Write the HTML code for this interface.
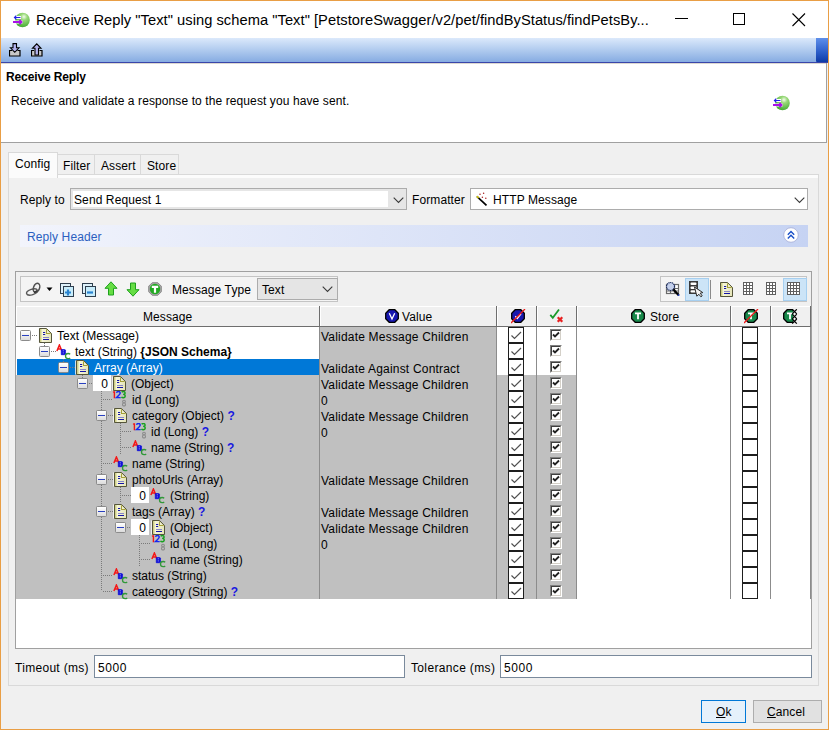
<!DOCTYPE html>
<html><head><meta charset="utf-8">
<style>
*{margin:0;padding:0;box-sizing:border-box}
html,body{width:829px;height:730px;overflow:hidden;background:#f0f0f0;font-family:"Liberation Sans",sans-serif;font-size:12px;color:#000}
.a{position:absolute}
.t{position:absolute;white-space:nowrap;line-height:14px;letter-spacing:0.1px}
#win{left:0;top:0;width:829px;height:730px;border:1px solid #e99e45}
#title{left:1px;top:1px;width:827px;height:37px;background:#fff}
#tbar{left:1px;top:38px;width:827px;height:25px;background:linear-gradient(#dbe9fb,#86ace2);border-bottom:1px solid #3a46aa}
#hdr{left:1px;top:63px;width:826px;height:80px;background:#fff;border-right:1px solid #a0a0a0;border-bottom:1px solid #a0a0a0}
.tab{position:absolute;border:1px solid #d9d9d9;border-bottom:none;background:#f0f0f0}
.panel{position:absolute;border:1px solid #d9d9d9}
.combo{position:absolute;background:#fff;border:1px solid #acacac}
.field{position:absolute;background:#fff;border:1px solid #7a8a9c}
</style></head><body>
<div id="win" class="a"></div>
<div id="title" class="a">
  <svg class="a" style="left:11px;top:10px" width="18" height="18" viewBox="0 0 18 18">
    <defs><radialGradient id="gb" cx="0.6" cy="0.28" r="0.8"><stop offset="0" stop-color="#f4fcee"/><stop offset="0.28" stop-color="#98d878"/><stop offset="1" stop-color="#38a428"/></radialGradient></defs>
    <circle cx="10.5" cy="9" r="7.3" fill="url(#gb)"/>
    <path d="M2.5 6.5h6.5M2.5 11h8" stroke="#fff" stroke-width="3.2"/>
    <path d="M2.5 6.5h6M4.3 4.7L2.5 6.5L4.3 8.3" stroke="#2020e8" stroke-width="1.2" fill="none"/>
    <path d="M1 11h8.5M7.5 9L9.5 11L7.5 13" stroke="#a812e8" stroke-width="1.8" fill="none"/>
  </svg>
  <div class="t" style="left:35px;top:10px;font-size:14.7px;line-height:18px;color:#000;letter-spacing:0.04px">Receive Reply "Text" using schema "Text" [PetstoreSwagger/v2/pet/findByStatus/findPetsBy...</div>
  <div class="a" style="left:674px;top:17px;width:13px;height:1px;background:#000"></div>
  <div class="a" style="left:732px;top:12px;width:12px;height:12px;border:1px solid #000"></div>
  <svg class="a" style="left:790px;top:11px" width="16" height="16" viewBox="0 0 16 16"><path d="M1.5 1.5L14 14M14 1.5L1.5 14" stroke="#000" stroke-width="1.1"/></svg>
</div>
<div id="tbar" class="a">
  <div class="a" style="right:0;top:0;width:12px;height:24px;border-radius:0 0 0 1px;background:linear-gradient(#5f8fea,#2a5cc8 60%,#0d3aa6)"></div>
  <svg class="a" style="left:8px;top:5px" width="12" height="14" viewBox="0 0 12 14"><path d="M3 7.5H0.5V13H11V7.5H8.5" stroke="#000" stroke-width="1.2" fill="#c8c8c8"/><path d="M4 0.6H7.5V4.8H10L5.75 9.3L1.5 4.8H4Z" fill="#b4b4f0" stroke="#000" stroke-width="1.1"/></svg>
  <svg class="a" style="left:30px;top:5px" width="12" height="14" viewBox="0 0 12 14"><path d="M3 7.5H0.5V13H11V7.5H8.5" stroke="#000" stroke-width="1.2" fill="#c8c8c8"/><path d="M4 12V5.3H1.5L5.75 0.8L10 5.3H7.5V12Z" fill="#b4b4f0" stroke="#000" stroke-width="1.1"/></svg>
</div>
<div id="hdr" class="a">
  <div class="a" style="left:0;top:0;width:825px;height:1px;background:#dcd8d0"></div>
  <div class="t" style="left:5px;top:7px;font-weight:bold;letter-spacing:-0.12px">Receive Reply</div>
  <div class="t" style="left:10px;top:31px">Receive and validate a response to the request you have sent.</div>
  <svg class="a" style="left:771px;top:31px" width="18" height="18" viewBox="0 0 18 18">
    <defs><radialGradient id="gb2" cx="0.6" cy="0.28" r="0.8"><stop offset="0" stop-color="#f4fcee"/><stop offset="0.28" stop-color="#98d878"/><stop offset="1" stop-color="#38a428"/></radialGradient></defs>
    <circle cx="10.5" cy="9" r="7.3" fill="url(#gb2)"/>
    <path d="M2.5 6.5h6.5M2.5 11h8" stroke="#fff" stroke-width="3.2"/>
    <path d="M2.5 6.5h6M4.3 4.7L2.5 6.5L4.3 8.3" stroke="#2020e8" stroke-width="1.2" fill="none"/>
    <path d="M1 11h8.5M7.5 9L9.5 11L7.5 13" stroke="#a812e8" stroke-width="1.8" fill="none"/>
  </svg>
</div>

<!-- tabs -->
<div class="tab" style="left:8px;top:152px;width:50px;height:26px;background:#fbfbfb;z-index:2"><div class="t" style="left:6px;top:4px">Config</div></div>
<div class="tab" style="left:57px;top:154px;width:38px;height:20px"><div class="t" style="left:5px;top:4px">Filter</div></div>
<div class="tab" style="left:94px;top:154px;width:47px;height:20px"><div class="t" style="left:6px;top:4px">Assert</div></div>
<div class="tab" style="left:140px;top:154px;width:39px;height:20px"><div class="t" style="left:6px;top:4px">Store</div></div>
<div class="panel" style="left:8px;top:174px;width:811px;height:512px;background:#f0f0f0"></div><div class="a" style="left:9px;top:175px;width:809px;height:3px;background:#fcfcfc"></div>
<!-- reply to row -->
<div class="t" style="left:20px;top:193px">Reply to</div>
<div class="combo" style="left:70px;top:188px;width:337px;height:22px;background:#e6e6e6">
  <div class="a" style="left:2px;top:2px;width:315px;height:16px;background:#fff"></div>
  <div class="t" style="left:3px;top:4px">Send Request 1</div>
  <svg class="a" style="left:322px;top:8px" width="11" height="7" viewBox="0 0 11 7"><path d="M0.7 0.7L5.5 5.5L10.3 0.7" stroke="#3a3a3a" stroke-width="1.1" fill="none"/></svg>
</div>
<div class="t" style="left:412px;top:193px">Formatter</div>
<div class="combo" style="left:470px;top:188px;width:338px;height:22px">
  <svg class="a" style="left:4px;top:3px" width="14" height="14" viewBox="0 0 14 14"><path d="M1.8 4.3L11.5 13.3" stroke="#000" stroke-width="1.7"/><path d="M1.8 4.3L3.6 6" stroke="#f4e400" stroke-width="1.2"/><circle cx="5" cy="2.2" r="0.75" fill="#a82020"/><circle cx="8.6" cy="1.2" r="0.75" fill="#a82020"/><circle cx="7.4" cy="5.3" r="0.75" fill="#a82020"/><circle cx="10.8" cy="6.3" r="0.75" fill="#a82020"/></svg>
  <div class="t" style="left:22px;top:4px">HTTP Message</div>
  <svg class="a" style="left:323px;top:8px" width="11" height="7" viewBox="0 0 11 7"><path d="M0.7 0.7L5.5 5.5L10.3 0.7" stroke="#3a3a3a" stroke-width="1.1" fill="none"/></svg>
</div>
<!-- reply header -->
<div class="a" style="left:20px;top:225px;width:788px;height:22px;background:linear-gradient(90deg,#f2f4fc,#c6d3f3)">
  <div class="t" style="left:7px;top:5px;color:#2b5fc0">Reply Header</div>
  <svg class="a" style="left:762px;top:1px" width="18" height="18" viewBox="0 0 18 18"><circle cx="9" cy="9" r="7.3" fill="#fff" stroke="#aab2da" stroke-width="0.9"/><path d="M5.8 8.7L9 5.5L12.2 8.7M5.8 12.5L9 9.3L12.2 12.5" stroke="#1a50c8" stroke-width="1.4" fill="none"/></svg>
</div>
<!-- table panel -->
<div class="a" style="left:15px;top:271px;width:797px;height:378px;border:1px solid #a0a0a0;background:#fff"></div>
<div class="a" style="left:16px;top:272px;width:795px;height:35px;background:#f0f0f0"></div>
<div class="a" style="left:20px;top:276px;width:318px;height:26px;border:1px solid #c4c4c4;background:#f4f4f4"></div>
<div class="a" style="left:660px;top:276px;width:147px;height:26px;border:1px solid #c4c4c4;background:#f4f4f4"></div>
<div class="t" style="left:172px;top:283px">Message Type</div>
<div class="a" style="left:257px;top:278px;width:81px;height:22px;border:1px solid #acacac;background:#e5e5e5">
  <div class="t" style="left:4px;top:4px">Text</div>
  <svg class="a" style="left:64px;top:7px" width="11" height="7" viewBox="0 0 11 7"><path d="M0.7 0.7L5.5 5.5L10.3 0.7" stroke="#3a3a3a" stroke-width="1.1" fill="none"/></svg>
</div>
<!-- timeout row -->
<div class="t" style="left:15px;top:661px;letter-spacing:0.3px">Timeout (ms)</div>
<div class="field" style="left:94px;top:655px;width:311px;height:23px"><div class="t" style="left:3px;top:5px;letter-spacing:0.6px">5000</div></div>
<div class="t" style="left:411px;top:661px;letter-spacing:0.35px">Tolerance (ms)</div>
<div class="field" style="left:500px;top:655px;width:312px;height:23px"><div class="t" style="left:3px;top:5px;letter-spacing:0.6px">5000</div></div>
<!-- buttons -->
<div class="a" style="left:701px;top:700px;width:45px;height:23px;border:1px solid #0078d7;background:#e5f1fb"><div class="t" style="left:14px;top:4px"><u>O</u>k</div></div>
<div class="a" style="left:753px;top:700px;width:69px;height:23px;border:1px solid #adadad;background:#e1e1e1"><div class="t" style="left:13px;top:4px"><u>C</u>ancel</div></div>

<svg width="0" height="0" style="position:absolute"><defs><linearGradient id="docg" x1="0" y1="0" x2="1" y2="0"><stop offset="0" stop-color="#bcbc60"/><stop offset="0.25" stop-color="#f6f6d8"/><stop offset="1" stop-color="#e4e4b8"/></linearGradient></defs></svg><div class="a" style="left:16px;top:327px;width:303px;height:32px;background:#fff"></div><div class="a" style="left:17px;top:359px;width:302px;height:16px;background:#0078d7"></div><div class="a" style="left:16px;top:375px;width:303px;height:224px;background:#c0c0c0"></div><div class="a" style="left:320px;top:327px;width:176px;height:272px;background:#c0c0c0"></div><div class="a" style="left:497px;top:375px;width:79px;height:224px;background:#c0c0c0"></div><div class="a" style="left:319px;top:327px;width:1px;height:272px;background:#8c8c8c"></div><div class="a" style="left:496px;top:327px;width:1px;height:272px;background:#8c8c8c"></div><div class="a" style="left:536px;top:327px;width:1px;height:272px;background:#8c8c8c"></div><div class="a" style="left:576px;top:327px;width:1px;height:272px;background:#8c8c8c"></div><div class="a" style="left:730px;top:327px;width:1px;height:272px;background:#8c8c8c"></div><div class="a" style="left:770px;top:327px;width:1px;height:272px;background:#8c8c8c"></div><div class="a" style="left:810px;top:327px;width:1px;height:272px;background:#8c8c8c"></div><div class="a" style="left:44px;top:343px;width:1px;height:3px;background:repeating-linear-gradient(#7a7a7a 0 1px,transparent 1px 2px)"></div><div class="a" style="left:32px;top:335px;width:5px;height:1px;background:repeating-linear-gradient(90deg,#7a7a7a 0 1px,transparent 1px 2px)"></div><div class="a" style="left:51px;top:351px;width:5px;height:1px;background:repeating-linear-gradient(90deg,#7a7a7a 0 1px,transparent 1px 2px)"></div><div class="a" style="left:70px;top:367px;width:5px;height:1px;background:repeating-linear-gradient(90deg,#7a7a7a 0 1px,transparent 1px 2px)"></div><div class="a" style="left:89px;top:383px;width:3px;height:1px;background:repeating-linear-gradient(90deg,#7a7a7a 0 1px,transparent 1px 2px)"></div><div class="a" style="left:103px;top:399px;width:9px;height:1px;background:repeating-linear-gradient(90deg,#7a7a7a 0 1px,transparent 1px 2px)"></div><div class="a" style="left:108px;top:415px;width:5px;height:1px;background:repeating-linear-gradient(90deg,#7a7a7a 0 1px,transparent 1px 2px)"></div><div class="a" style="left:122px;top:431px;width:10px;height:1px;background:repeating-linear-gradient(90deg,#7a7a7a 0 1px,transparent 1px 2px)"></div><div class="a" style="left:122px;top:447px;width:10px;height:1px;background:repeating-linear-gradient(90deg,#7a7a7a 0 1px,transparent 1px 2px)"></div><div class="a" style="left:103px;top:463px;width:9px;height:1px;background:repeating-linear-gradient(90deg,#7a7a7a 0 1px,transparent 1px 2px)"></div><div class="a" style="left:108px;top:479px;width:5px;height:1px;background:repeating-linear-gradient(90deg,#7a7a7a 0 1px,transparent 1px 2px)"></div><div class="a" style="left:122px;top:495px;width:9px;height:1px;background:repeating-linear-gradient(90deg,#7a7a7a 0 1px,transparent 1px 2px)"></div><div class="a" style="left:108px;top:511px;width:5px;height:1px;background:repeating-linear-gradient(90deg,#7a7a7a 0 1px,transparent 1px 2px)"></div><div class="a" style="left:127px;top:527px;width:4px;height:1px;background:repeating-linear-gradient(90deg,#7a7a7a 0 1px,transparent 1px 2px)"></div><div class="a" style="left:141px;top:543px;width:10px;height:1px;background:repeating-linear-gradient(90deg,#7a7a7a 0 1px,transparent 1px 2px)"></div><div class="a" style="left:141px;top:559px;width:10px;height:1px;background:repeating-linear-gradient(90deg,#7a7a7a 0 1px,transparent 1px 2px)"></div><div class="a" style="left:103px;top:575px;width:9px;height:1px;background:repeating-linear-gradient(90deg,#7a7a7a 0 1px,transparent 1px 2px)"></div><div class="a" style="left:103px;top:591px;width:9px;height:1px;background:repeating-linear-gradient(90deg,#7a7a7a 0 1px,transparent 1px 2px)"></div><div class="a" style="left:63px;top:359px;width:1px;height:3px;background:repeating-linear-gradient(#7a7a7a 0 1px,transparent 1px 2px)"></div><div class="a" style="left:82px;top:375px;width:1px;height:3px;background:repeating-linear-gradient(#7a7a7a 0 1px,transparent 1px 2px)"></div><div class="a" style="left:101px;top:391px;width:1px;height:200px;background:repeating-linear-gradient(#7a7a7a 0 1px,transparent 1px 2px)"></div><div class="a" style="left:120px;top:423px;width:1px;height:32px;background:repeating-linear-gradient(#7a7a7a 0 1px,transparent 1px 2px)"></div><div class="a" style="left:120px;top:487px;width:1px;height:16px;background:repeating-linear-gradient(#7a7a7a 0 1px,transparent 1px 2px)"></div><div class="a" style="left:139px;top:535px;width:1px;height:32px;background:repeating-linear-gradient(#7a7a7a 0 1px,transparent 1px 2px)"></div><div class="a" style="left:20px;top:330px;width:11px;height:11px;border:1px solid #8b8b8b;border-radius:1.5px;background:linear-gradient(#ffffff,#dcdcdc)"><div class="a" style="left:1px;top:4px;width:7px;height:1px;background:#2940c0"></div></div><svg class="a" style="left:38px;top:328px" width="15" height="15" viewBox="0 0 15 15"><rect x="0" y="0.5" width="2" height="14" fill="#fafafa" opacity="0.8"/><path d="M1.5 0.5H8.5L13.5 5.5V14.5H1.5Z" fill="url(#docg)" stroke="#55553a" stroke-width="1"/><path d="M8 0.8V6H13.2Z" fill="#a4a038"/><path d="M9 1.8V5H12.2Z" fill="#eeeed0"/><path d="M5 4.5h2.2M5 6.5h2.2M5 11.5h6" stroke="#1414a8" stroke-width="1"/><path d="M5 9.5h6" stroke="#8888c8" stroke-width="1"/></svg><div class="t" style="left:57px;top:329px;color:#000;z-index:1;letter-spacing:0">Text (Message)</div><div class="t" style="left:321px;top:330px;letter-spacing:0.2px">Validate Message Children</div><div class="a" style="left:508px;top:327px;width:16px;height:16px;border:1px solid #1e1e1e;background:#fff"></div><svg class="a" style="left:508px;top:327px" width="16" height="16" viewBox="0 0 16 16"><path d="M3.5 8.5L6.5 11.5L13 5" stroke="#505050" stroke-width="1.2" fill="none"/></svg><div class="a" style="left:550px;top:329px;width:12px;height:12px;border:1px solid;border-color:#808080 #fff #fff #808080;background:#fff"><div class="a" style="left:0;top:0;width:10px;height:10px;border:1px solid;border-color:#404040 #d4d0c8 #d4d0c8 #404040"></div></div><svg class="a" style="left:550px;top:329px" width="12" height="12" viewBox="0 0 12 12"><path d="M3 5.5L5 7.5L9 3.5" stroke="#222" stroke-width="1.8" fill="none"/></svg><div class="a" style="left:742px;top:327px;width:16px;height:16px;border:1px solid #1e1e1e;background:#fff"></div><div class="a" style="left:39px;top:346px;width:11px;height:11px;border:1px solid #8b8b8b;border-radius:1.5px;background:linear-gradient(#ffffff,#dcdcdc)"><div class="a" style="left:1px;top:4px;width:7px;height:1px;background:#2940c0"></div></div><svg class="a" style="left:56px;top:344px" width="15" height="16" viewBox="0 0 15 16"><path d="M0.9 7L3.4 1L5.9 7M1.9 5h3" stroke="#f41818" stroke-width="1.5" fill="none"/><path d="M5.3 5.6h2.9q1.5 0 1.5 1.3q0 0.9-0.8 1.1q1 0.3 1 1.3q0 1.4-1.6 1.4h-3z" fill="#1010d8" stroke="#1010d8" stroke-width="0.8"/><path d="M6.8 6.8h0.9M6.8 8.9h0.9" stroke="#c8c8f0" stroke-width="0.9"/><path d="M14.2 10.2q-0.8-0.7-2.1-0.7q-2.6 0-2.6 2.6q0 2.6 2.6 2.6q1.3 0 2.1-0.7" stroke="#309838" stroke-width="1.3" fill="none"/></svg><div class="t" style="left:75px;top:345px;color:#000;z-index:1;letter-spacing:0">text (String) <b>{JSON Schema}</b></div><div class="a" style="left:508px;top:343px;width:16px;height:16px;border:1px solid #1e1e1e;background:#fff"></div><svg class="a" style="left:508px;top:343px" width="16" height="16" viewBox="0 0 16 16"><path d="M3.5 8.5L6.5 11.5L13 5" stroke="#505050" stroke-width="1.2" fill="none"/></svg><div class="a" style="left:550px;top:345px;width:12px;height:12px;border:1px solid;border-color:#808080 #fff #fff #808080;background:#fff"><div class="a" style="left:0;top:0;width:10px;height:10px;border:1px solid;border-color:#404040 #d4d0c8 #d4d0c8 #404040"></div></div><svg class="a" style="left:550px;top:345px" width="12" height="12" viewBox="0 0 12 12"><path d="M3 5.5L5 7.5L9 3.5" stroke="#222" stroke-width="1.8" fill="none"/></svg><div class="a" style="left:742px;top:343px;width:16px;height:16px;border:1px solid #1e1e1e;background:#fff"></div><div class="a" style="left:58px;top:362px;width:11px;height:11px;border:1px solid #8b8b8b;border-radius:1.5px;background:linear-gradient(#ffffff,#dcdcdc)"><div class="a" style="left:1px;top:4px;width:7px;height:1px;background:#2940c0"></div></div><svg class="a" style="left:75px;top:360px" width="15" height="15" viewBox="0 0 15 15"><rect x="0" y="0.5" width="2" height="14" fill="#fafafa" opacity="0.8"/><path d="M1.5 0.5H8.5L13.5 5.5V14.5H1.5Z" fill="url(#docg)" stroke="#55553a" stroke-width="1"/><path d="M8 0.8V6H13.2Z" fill="#a4a038"/><path d="M9 1.8V5H12.2Z" fill="#eeeed0"/><path d="M5 4.5h2.2M5 6.5h2.2M5 11.5h6" stroke="#1414a8" stroke-width="1"/><path d="M5 9.5h6" stroke="#8888c8" stroke-width="1"/></svg><div class="t" style="left:94px;top:361px;color:#fff;z-index:1;letter-spacing:0">Array (Array)</div><div class="t" style="left:321px;top:362px;letter-spacing:0.2px">Validate Against Contract</div><div class="a" style="left:508px;top:359px;width:16px;height:16px;border:1px solid #1e1e1e;background:#fff"></div><svg class="a" style="left:508px;top:359px" width="16" height="16" viewBox="0 0 16 16"><path d="M3.5 8.5L6.5 11.5L13 5" stroke="#505050" stroke-width="1.2" fill="none"/></svg><div class="a" style="left:550px;top:361px;width:12px;height:12px;border:1px solid;border-color:#808080 #fff #fff #808080;background:#fff"><div class="a" style="left:0;top:0;width:10px;height:10px;border:1px solid;border-color:#404040 #d4d0c8 #d4d0c8 #404040"></div></div><svg class="a" style="left:550px;top:361px" width="12" height="12" viewBox="0 0 12 12"><path d="M3 5.5L5 7.5L9 3.5" stroke="#222" stroke-width="1.8" fill="none"/></svg><div class="a" style="left:742px;top:359px;width:16px;height:16px;border:1px solid #1e1e1e;background:#fff"></div><div class="a" style="left:77px;top:378px;width:11px;height:11px;border:1px solid #8b8b8b;border-radius:1.5px;background:linear-gradient(#ffffff,#dcdcdc)"><div class="a" style="left:1px;top:4px;width:7px;height:1px;background:#2940c0"></div></div><div class="a" style="left:93px;top:375px;width:18px;height:16px;background:#fff"><div class="t" style="right:3px;top:2px">0</div></div><svg class="a" style="left:112px;top:376px" width="15" height="15" viewBox="0 0 15 15"><rect x="0" y="0.5" width="2" height="14" fill="#fafafa" opacity="0.8"/><path d="M1.5 0.5H8.5L13.5 5.5V14.5H1.5Z" fill="url(#docg)" stroke="#55553a" stroke-width="1"/><path d="M8 0.8V6H13.2Z" fill="#a4a038"/><path d="M9 1.8V5H12.2Z" fill="#eeeed0"/><path d="M5 4.5h2.2M5 6.5h2.2M5 11.5h6" stroke="#1414a8" stroke-width="1"/><path d="M5 9.5h6" stroke="#8888c8" stroke-width="1"/></svg><div class="t" style="left:131px;top:377px;color:#000;z-index:1;letter-spacing:0">(Object)</div><div class="t" style="left:321px;top:378px;letter-spacing:0.2px">Validate Message Children</div><div class="a" style="left:508px;top:375px;width:16px;height:16px;border:1px solid #1e1e1e;background:#fff"></div><svg class="a" style="left:508px;top:375px" width="16" height="16" viewBox="0 0 16 16"><path d="M3.5 8.5L6.5 11.5L13 5" stroke="#505050" stroke-width="1.2" fill="none"/></svg><div class="a" style="left:550px;top:377px;width:12px;height:12px;border:1px solid;border-color:#808080 #fff #fff #808080;background:#fff"><div class="a" style="left:0;top:0;width:10px;height:10px;border:1px solid;border-color:#404040 #d4d0c8 #d4d0c8 #404040"></div></div><svg class="a" style="left:550px;top:377px" width="12" height="12" viewBox="0 0 12 12"><path d="M3 5.5L5 7.5L9 3.5" stroke="#222" stroke-width="1.8" fill="none"/></svg><div class="a" style="left:742px;top:375px;width:16px;height:16px;border:1px solid #1e1e1e;background:#fff"></div><svg class="a" style="left:112px;top:391px" width="15" height="16" viewBox="0 0 15 16"><path d="M2.4 0.3V7.2M1.2 1.6L2.4 0.5" stroke="#f01818" stroke-width="1.4" fill="none"/><path d="M4.4 1.8Q5 0.5 6.5 0.5Q8.2 0.5 8.2 2.1Q8.2 3.3 4.5 6.6H8.7" stroke="#1428f0" stroke-width="1.4" fill="none"/><path d="M9.6 1.1Q10.3 0.5 11.3 0.5Q13.1 0.5 13.1 1.9Q13.1 3.4 11.1 3.4Q13.2 3.4 13.2 5.1Q13.2 6.8 11.2 6.8Q10.1 6.8 9.4 6.1" stroke="#18a020" stroke-width="1.4" fill="none"/><path d="M12 9.3q-1.4 0-1.4 1.3t1.4 1.3t1.5 1.5t-1.5 1.5t-1.5-1.5t1.5-1.5t1.4-1.3t-1.4-1.3z" stroke="#8c8c8c" stroke-width="1.1" fill="none"/></svg><div class="t" style="left:132px;top:393px;color:#000;z-index:1;letter-spacing:0">id (Long)</div><div class="t" style="left:321px;top:394px;letter-spacing:0.2px">0</div><div class="a" style="left:508px;top:391px;width:16px;height:16px;border:1px solid #1e1e1e;background:#fff"></div><svg class="a" style="left:508px;top:391px" width="16" height="16" viewBox="0 0 16 16"><path d="M3.5 8.5L6.5 11.5L13 5" stroke="#505050" stroke-width="1.2" fill="none"/></svg><div class="a" style="left:550px;top:393px;width:12px;height:12px;border:1px solid;border-color:#808080 #fff #fff #808080;background:#fff"><div class="a" style="left:0;top:0;width:10px;height:10px;border:1px solid;border-color:#404040 #d4d0c8 #d4d0c8 #404040"></div></div><svg class="a" style="left:550px;top:393px" width="12" height="12" viewBox="0 0 12 12"><path d="M3 5.5L5 7.5L9 3.5" stroke="#222" stroke-width="1.8" fill="none"/></svg><div class="a" style="left:742px;top:391px;width:16px;height:16px;border:1px solid #1e1e1e;background:#fff"></div><div class="a" style="left:96px;top:410px;width:11px;height:11px;border:1px solid #8b8b8b;border-radius:1.5px;background:linear-gradient(#ffffff,#dcdcdc)"><div class="a" style="left:1px;top:4px;width:7px;height:1px;background:#2940c0"></div></div><svg class="a" style="left:113px;top:408px" width="15" height="15" viewBox="0 0 15 15"><rect x="0" y="0.5" width="2" height="14" fill="#fafafa" opacity="0.8"/><path d="M1.5 0.5H8.5L13.5 5.5V14.5H1.5Z" fill="url(#docg)" stroke="#55553a" stroke-width="1"/><path d="M8 0.8V6H13.2Z" fill="#a4a038"/><path d="M9 1.8V5H12.2Z" fill="#eeeed0"/><path d="M5 4.5h2.2M5 6.5h2.2M5 11.5h6" stroke="#1414a8" stroke-width="1"/><path d="M5 9.5h6" stroke="#8888c8" stroke-width="1"/></svg><div class="t" style="left:132px;top:409px;color:#000;z-index:1;letter-spacing:0">category (Object) <b style="color:#1818e0">?</b></div><div class="t" style="left:321px;top:410px;letter-spacing:0.2px">Validate Message Children</div><div class="a" style="left:508px;top:407px;width:16px;height:16px;border:1px solid #1e1e1e;background:#fff"></div><svg class="a" style="left:508px;top:407px" width="16" height="16" viewBox="0 0 16 16"><path d="M3.5 8.5L6.5 11.5L13 5" stroke="#505050" stroke-width="1.2" fill="none"/></svg><div class="a" style="left:550px;top:409px;width:12px;height:12px;border:1px solid;border-color:#808080 #fff #fff #808080;background:#fff"><div class="a" style="left:0;top:0;width:10px;height:10px;border:1px solid;border-color:#404040 #d4d0c8 #d4d0c8 #404040"></div></div><svg class="a" style="left:550px;top:409px" width="12" height="12" viewBox="0 0 12 12"><path d="M3 5.5L5 7.5L9 3.5" stroke="#222" stroke-width="1.8" fill="none"/></svg><div class="a" style="left:742px;top:407px;width:16px;height:16px;border:1px solid #1e1e1e;background:#fff"></div><svg class="a" style="left:132px;top:423px" width="15" height="16" viewBox="0 0 15 16"><path d="M2.4 0.3V7.2M1.2 1.6L2.4 0.5" stroke="#f01818" stroke-width="1.4" fill="none"/><path d="M4.4 1.8Q5 0.5 6.5 0.5Q8.2 0.5 8.2 2.1Q8.2 3.3 4.5 6.6H8.7" stroke="#1428f0" stroke-width="1.4" fill="none"/><path d="M9.6 1.1Q10.3 0.5 11.3 0.5Q13.1 0.5 13.1 1.9Q13.1 3.4 11.1 3.4Q13.2 3.4 13.2 5.1Q13.2 6.8 11.2 6.8Q10.1 6.8 9.4 6.1" stroke="#18a020" stroke-width="1.4" fill="none"/><path d="M12 9.3q-1.4 0-1.4 1.3t1.4 1.3t1.5 1.5t-1.5 1.5t-1.5-1.5t1.5-1.5t1.4-1.3t-1.4-1.3z" stroke="#8c8c8c" stroke-width="1.1" fill="none"/></svg><div class="t" style="left:151px;top:425px;color:#000;z-index:1;letter-spacing:0">id (Long) <b style="color:#1818e0">?</b></div><div class="t" style="left:321px;top:426px;letter-spacing:0.2px">0</div><div class="a" style="left:508px;top:423px;width:16px;height:16px;border:1px solid #1e1e1e;background:#fff"></div><svg class="a" style="left:508px;top:423px" width="16" height="16" viewBox="0 0 16 16"><path d="M3.5 8.5L6.5 11.5L13 5" stroke="#505050" stroke-width="1.2" fill="none"/></svg><div class="a" style="left:550px;top:425px;width:12px;height:12px;border:1px solid;border-color:#808080 #fff #fff #808080;background:#fff"><div class="a" style="left:0;top:0;width:10px;height:10px;border:1px solid;border-color:#404040 #d4d0c8 #d4d0c8 #404040"></div></div><svg class="a" style="left:550px;top:425px" width="12" height="12" viewBox="0 0 12 12"><path d="M3 5.5L5 7.5L9 3.5" stroke="#222" stroke-width="1.8" fill="none"/></svg><div class="a" style="left:742px;top:423px;width:16px;height:16px;border:1px solid #1e1e1e;background:#fff"></div><svg class="a" style="left:132px;top:440px" width="15" height="16" viewBox="0 0 15 16"><path d="M0.9 7L3.4 1L5.9 7M1.9 5h3" stroke="#f41818" stroke-width="1.5" fill="none"/><path d="M5.3 5.6h2.9q1.5 0 1.5 1.3q0 0.9-0.8 1.1q1 0.3 1 1.3q0 1.4-1.6 1.4h-3z" fill="#1010d8" stroke="#1010d8" stroke-width="0.8"/><path d="M6.8 6.8h0.9M6.8 8.9h0.9" stroke="#c8c8f0" stroke-width="0.9"/><path d="M14.2 10.2q-0.8-0.7-2.1-0.7q-2.6 0-2.6 2.6q0 2.6 2.6 2.6q1.3 0 2.1-0.7" stroke="#309838" stroke-width="1.3" fill="none"/></svg><div class="t" style="left:151px;top:441px;color:#000;z-index:1;letter-spacing:0">name (String) <b style="color:#1818e0">?</b></div><div class="a" style="left:508px;top:439px;width:16px;height:16px;border:1px solid #1e1e1e;background:#fff"></div><svg class="a" style="left:508px;top:439px" width="16" height="16" viewBox="0 0 16 16"><path d="M3.5 8.5L6.5 11.5L13 5" stroke="#505050" stroke-width="1.2" fill="none"/></svg><div class="a" style="left:550px;top:441px;width:12px;height:12px;border:1px solid;border-color:#808080 #fff #fff #808080;background:#fff"><div class="a" style="left:0;top:0;width:10px;height:10px;border:1px solid;border-color:#404040 #d4d0c8 #d4d0c8 #404040"></div></div><svg class="a" style="left:550px;top:441px" width="12" height="12" viewBox="0 0 12 12"><path d="M3 5.5L5 7.5L9 3.5" stroke="#222" stroke-width="1.8" fill="none"/></svg><div class="a" style="left:742px;top:439px;width:16px;height:16px;border:1px solid #1e1e1e;background:#fff"></div><svg class="a" style="left:113px;top:456px" width="15" height="16" viewBox="0 0 15 16"><path d="M0.9 7L3.4 1L5.9 7M1.9 5h3" stroke="#f41818" stroke-width="1.5" fill="none"/><path d="M5.3 5.6h2.9q1.5 0 1.5 1.3q0 0.9-0.8 1.1q1 0.3 1 1.3q0 1.4-1.6 1.4h-3z" fill="#1010d8" stroke="#1010d8" stroke-width="0.8"/><path d="M6.8 6.8h0.9M6.8 8.9h0.9" stroke="#c8c8f0" stroke-width="0.9"/><path d="M14.2 10.2q-0.8-0.7-2.1-0.7q-2.6 0-2.6 2.6q0 2.6 2.6 2.6q1.3 0 2.1-0.7" stroke="#309838" stroke-width="1.3" fill="none"/></svg><div class="t" style="left:132px;top:457px;color:#000;z-index:1;letter-spacing:0">name (String)</div><div class="a" style="left:508px;top:455px;width:16px;height:16px;border:1px solid #1e1e1e;background:#fff"></div><svg class="a" style="left:508px;top:455px" width="16" height="16" viewBox="0 0 16 16"><path d="M3.5 8.5L6.5 11.5L13 5" stroke="#505050" stroke-width="1.2" fill="none"/></svg><div class="a" style="left:550px;top:457px;width:12px;height:12px;border:1px solid;border-color:#808080 #fff #fff #808080;background:#fff"><div class="a" style="left:0;top:0;width:10px;height:10px;border:1px solid;border-color:#404040 #d4d0c8 #d4d0c8 #404040"></div></div><svg class="a" style="left:550px;top:457px" width="12" height="12" viewBox="0 0 12 12"><path d="M3 5.5L5 7.5L9 3.5" stroke="#222" stroke-width="1.8" fill="none"/></svg><div class="a" style="left:742px;top:455px;width:16px;height:16px;border:1px solid #1e1e1e;background:#fff"></div><div class="a" style="left:96px;top:474px;width:11px;height:11px;border:1px solid #8b8b8b;border-radius:1.5px;background:linear-gradient(#ffffff,#dcdcdc)"><div class="a" style="left:1px;top:4px;width:7px;height:1px;background:#2940c0"></div></div><svg class="a" style="left:113px;top:472px" width="15" height="15" viewBox="0 0 15 15"><rect x="0" y="0.5" width="2" height="14" fill="#fafafa" opacity="0.8"/><path d="M1.5 0.5H8.5L13.5 5.5V14.5H1.5Z" fill="url(#docg)" stroke="#55553a" stroke-width="1"/><path d="M8 0.8V6H13.2Z" fill="#a4a038"/><path d="M9 1.8V5H12.2Z" fill="#eeeed0"/><path d="M5 4.5h2.2M5 6.5h2.2M5 11.5h6" stroke="#1414a8" stroke-width="1"/><path d="M5 9.5h6" stroke="#8888c8" stroke-width="1"/></svg><div class="t" style="left:132px;top:473px;color:#000;z-index:1;letter-spacing:0">photoUrls (Array)</div><div class="t" style="left:321px;top:474px;letter-spacing:0.2px">Validate Message Children</div><div class="a" style="left:508px;top:471px;width:16px;height:16px;border:1px solid #1e1e1e;background:#fff"></div><svg class="a" style="left:508px;top:471px" width="16" height="16" viewBox="0 0 16 16"><path d="M3.5 8.5L6.5 11.5L13 5" stroke="#505050" stroke-width="1.2" fill="none"/></svg><div class="a" style="left:550px;top:473px;width:12px;height:12px;border:1px solid;border-color:#808080 #fff #fff #808080;background:#fff"><div class="a" style="left:0;top:0;width:10px;height:10px;border:1px solid;border-color:#404040 #d4d0c8 #d4d0c8 #404040"></div></div><svg class="a" style="left:550px;top:473px" width="12" height="12" viewBox="0 0 12 12"><path d="M3 5.5L5 7.5L9 3.5" stroke="#222" stroke-width="1.8" fill="none"/></svg><div class="a" style="left:742px;top:471px;width:16px;height:16px;border:1px solid #1e1e1e;background:#fff"></div><div class="a" style="left:131px;top:487px;width:18px;height:16px;background:#fff"><div class="t" style="right:3px;top:2px">0</div></div><svg class="a" style="left:150px;top:488px" width="15" height="16" viewBox="0 0 15 16"><path d="M0.9 7L3.4 1L5.9 7M1.9 5h3" stroke="#f41818" stroke-width="1.5" fill="none"/><path d="M5.3 5.6h2.9q1.5 0 1.5 1.3q0 0.9-0.8 1.1q1 0.3 1 1.3q0 1.4-1.6 1.4h-3z" fill="#1010d8" stroke="#1010d8" stroke-width="0.8"/><path d="M6.8 6.8h0.9M6.8 8.9h0.9" stroke="#c8c8f0" stroke-width="0.9"/><path d="M14.2 10.2q-0.8-0.7-2.1-0.7q-2.6 0-2.6 2.6q0 2.6 2.6 2.6q1.3 0 2.1-0.7" stroke="#309838" stroke-width="1.3" fill="none"/></svg><div class="t" style="left:170px;top:489px;color:#000;z-index:1;letter-spacing:0">(String)</div><div class="a" style="left:508px;top:487px;width:16px;height:16px;border:1px solid #1e1e1e;background:#fff"></div><svg class="a" style="left:508px;top:487px" width="16" height="16" viewBox="0 0 16 16"><path d="M3.5 8.5L6.5 11.5L13 5" stroke="#505050" stroke-width="1.2" fill="none"/></svg><div class="a" style="left:550px;top:489px;width:12px;height:12px;border:1px solid;border-color:#808080 #fff #fff #808080;background:#fff"><div class="a" style="left:0;top:0;width:10px;height:10px;border:1px solid;border-color:#404040 #d4d0c8 #d4d0c8 #404040"></div></div><svg class="a" style="left:550px;top:489px" width="12" height="12" viewBox="0 0 12 12"><path d="M3 5.5L5 7.5L9 3.5" stroke="#222" stroke-width="1.8" fill="none"/></svg><div class="a" style="left:742px;top:487px;width:16px;height:16px;border:1px solid #1e1e1e;background:#fff"></div><div class="a" style="left:96px;top:506px;width:11px;height:11px;border:1px solid #8b8b8b;border-radius:1.5px;background:linear-gradient(#ffffff,#dcdcdc)"><div class="a" style="left:1px;top:4px;width:7px;height:1px;background:#2940c0"></div></div><svg class="a" style="left:113px;top:504px" width="15" height="15" viewBox="0 0 15 15"><rect x="0" y="0.5" width="2" height="14" fill="#fafafa" opacity="0.8"/><path d="M1.5 0.5H8.5L13.5 5.5V14.5H1.5Z" fill="url(#docg)" stroke="#55553a" stroke-width="1"/><path d="M8 0.8V6H13.2Z" fill="#a4a038"/><path d="M9 1.8V5H12.2Z" fill="#eeeed0"/><path d="M5 4.5h2.2M5 6.5h2.2M5 11.5h6" stroke="#1414a8" stroke-width="1"/><path d="M5 9.5h6" stroke="#8888c8" stroke-width="1"/></svg><div class="t" style="left:132px;top:505px;color:#000;z-index:1;letter-spacing:0">tags (Array) <b style="color:#1818e0">?</b></div><div class="t" style="left:321px;top:506px;letter-spacing:0.2px">Validate Message Children</div><div class="a" style="left:508px;top:503px;width:16px;height:16px;border:1px solid #1e1e1e;background:#fff"></div><svg class="a" style="left:508px;top:503px" width="16" height="16" viewBox="0 0 16 16"><path d="M3.5 8.5L6.5 11.5L13 5" stroke="#505050" stroke-width="1.2" fill="none"/></svg><div class="a" style="left:550px;top:505px;width:12px;height:12px;border:1px solid;border-color:#808080 #fff #fff #808080;background:#fff"><div class="a" style="left:0;top:0;width:10px;height:10px;border:1px solid;border-color:#404040 #d4d0c8 #d4d0c8 #404040"></div></div><svg class="a" style="left:550px;top:505px" width="12" height="12" viewBox="0 0 12 12"><path d="M3 5.5L5 7.5L9 3.5" stroke="#222" stroke-width="1.8" fill="none"/></svg><div class="a" style="left:742px;top:503px;width:16px;height:16px;border:1px solid #1e1e1e;background:#fff"></div><div class="a" style="left:115px;top:522px;width:11px;height:11px;border:1px solid #8b8b8b;border-radius:1.5px;background:linear-gradient(#ffffff,#dcdcdc)"><div class="a" style="left:1px;top:4px;width:7px;height:1px;background:#2940c0"></div></div><div class="a" style="left:131px;top:519px;width:18px;height:16px;background:#fff"><div class="t" style="right:3px;top:2px">0</div></div><svg class="a" style="left:151px;top:520px" width="15" height="15" viewBox="0 0 15 15"><rect x="0" y="0.5" width="2" height="14" fill="#fafafa" opacity="0.8"/><path d="M1.5 0.5H8.5L13.5 5.5V14.5H1.5Z" fill="url(#docg)" stroke="#55553a" stroke-width="1"/><path d="M8 0.8V6H13.2Z" fill="#a4a038"/><path d="M9 1.8V5H12.2Z" fill="#eeeed0"/><path d="M5 4.5h2.2M5 6.5h2.2M5 11.5h6" stroke="#1414a8" stroke-width="1"/><path d="M5 9.5h6" stroke="#8888c8" stroke-width="1"/></svg><div class="t" style="left:170px;top:521px;color:#000;z-index:1;letter-spacing:0">(Object)</div><div class="t" style="left:321px;top:522px;letter-spacing:0.2px">Validate Message Children</div><div class="a" style="left:508px;top:519px;width:16px;height:16px;border:1px solid #1e1e1e;background:#fff"></div><svg class="a" style="left:508px;top:519px" width="16" height="16" viewBox="0 0 16 16"><path d="M3.5 8.5L6.5 11.5L13 5" stroke="#505050" stroke-width="1.2" fill="none"/></svg><div class="a" style="left:550px;top:521px;width:12px;height:12px;border:1px solid;border-color:#808080 #fff #fff #808080;background:#fff"><div class="a" style="left:0;top:0;width:10px;height:10px;border:1px solid;border-color:#404040 #d4d0c8 #d4d0c8 #404040"></div></div><svg class="a" style="left:550px;top:521px" width="12" height="12" viewBox="0 0 12 12"><path d="M3 5.5L5 7.5L9 3.5" stroke="#222" stroke-width="1.8" fill="none"/></svg><div class="a" style="left:742px;top:519px;width:16px;height:16px;border:1px solid #1e1e1e;background:#fff"></div><svg class="a" style="left:151px;top:535px" width="15" height="16" viewBox="0 0 15 16"><path d="M2.4 0.3V7.2M1.2 1.6L2.4 0.5" stroke="#f01818" stroke-width="1.4" fill="none"/><path d="M4.4 1.8Q5 0.5 6.5 0.5Q8.2 0.5 8.2 2.1Q8.2 3.3 4.5 6.6H8.7" stroke="#1428f0" stroke-width="1.4" fill="none"/><path d="M9.6 1.1Q10.3 0.5 11.3 0.5Q13.1 0.5 13.1 1.9Q13.1 3.4 11.1 3.4Q13.2 3.4 13.2 5.1Q13.2 6.8 11.2 6.8Q10.1 6.8 9.4 6.1" stroke="#18a020" stroke-width="1.4" fill="none"/><path d="M12 9.3q-1.4 0-1.4 1.3t1.4 1.3t1.5 1.5t-1.5 1.5t-1.5-1.5t1.5-1.5t1.4-1.3t-1.4-1.3z" stroke="#8c8c8c" stroke-width="1.1" fill="none"/></svg><div class="t" style="left:170px;top:537px;color:#000;z-index:1;letter-spacing:0">id (Long)</div><div class="t" style="left:321px;top:538px;letter-spacing:0.2px">0</div><div class="a" style="left:508px;top:535px;width:16px;height:16px;border:1px solid #1e1e1e;background:#fff"></div><svg class="a" style="left:508px;top:535px" width="16" height="16" viewBox="0 0 16 16"><path d="M3.5 8.5L6.5 11.5L13 5" stroke="#505050" stroke-width="1.2" fill="none"/></svg><div class="a" style="left:550px;top:537px;width:12px;height:12px;border:1px solid;border-color:#808080 #fff #fff #808080;background:#fff"><div class="a" style="left:0;top:0;width:10px;height:10px;border:1px solid;border-color:#404040 #d4d0c8 #d4d0c8 #404040"></div></div><svg class="a" style="left:550px;top:537px" width="12" height="12" viewBox="0 0 12 12"><path d="M3 5.5L5 7.5L9 3.5" stroke="#222" stroke-width="1.8" fill="none"/></svg><div class="a" style="left:742px;top:535px;width:16px;height:16px;border:1px solid #1e1e1e;background:#fff"></div><svg class="a" style="left:151px;top:552px" width="15" height="16" viewBox="0 0 15 16"><path d="M0.9 7L3.4 1L5.9 7M1.9 5h3" stroke="#f41818" stroke-width="1.5" fill="none"/><path d="M5.3 5.6h2.9q1.5 0 1.5 1.3q0 0.9-0.8 1.1q1 0.3 1 1.3q0 1.4-1.6 1.4h-3z" fill="#1010d8" stroke="#1010d8" stroke-width="0.8"/><path d="M6.8 6.8h0.9M6.8 8.9h0.9" stroke="#c8c8f0" stroke-width="0.9"/><path d="M14.2 10.2q-0.8-0.7-2.1-0.7q-2.6 0-2.6 2.6q0 2.6 2.6 2.6q1.3 0 2.1-0.7" stroke="#309838" stroke-width="1.3" fill="none"/></svg><div class="t" style="left:170px;top:553px;color:#000;z-index:1;letter-spacing:0">name (String)</div><div class="a" style="left:508px;top:551px;width:16px;height:16px;border:1px solid #1e1e1e;background:#fff"></div><svg class="a" style="left:508px;top:551px" width="16" height="16" viewBox="0 0 16 16"><path d="M3.5 8.5L6.5 11.5L13 5" stroke="#505050" stroke-width="1.2" fill="none"/></svg><div class="a" style="left:550px;top:553px;width:12px;height:12px;border:1px solid;border-color:#808080 #fff #fff #808080;background:#fff"><div class="a" style="left:0;top:0;width:10px;height:10px;border:1px solid;border-color:#404040 #d4d0c8 #d4d0c8 #404040"></div></div><svg class="a" style="left:550px;top:553px" width="12" height="12" viewBox="0 0 12 12"><path d="M3 5.5L5 7.5L9 3.5" stroke="#222" stroke-width="1.8" fill="none"/></svg><div class="a" style="left:742px;top:551px;width:16px;height:16px;border:1px solid #1e1e1e;background:#fff"></div><svg class="a" style="left:113px;top:568px" width="15" height="16" viewBox="0 0 15 16"><path d="M0.9 7L3.4 1L5.9 7M1.9 5h3" stroke="#f41818" stroke-width="1.5" fill="none"/><path d="M5.3 5.6h2.9q1.5 0 1.5 1.3q0 0.9-0.8 1.1q1 0.3 1 1.3q0 1.4-1.6 1.4h-3z" fill="#1010d8" stroke="#1010d8" stroke-width="0.8"/><path d="M6.8 6.8h0.9M6.8 8.9h0.9" stroke="#c8c8f0" stroke-width="0.9"/><path d="M14.2 10.2q-0.8-0.7-2.1-0.7q-2.6 0-2.6 2.6q0 2.6 2.6 2.6q1.3 0 2.1-0.7" stroke="#309838" stroke-width="1.3" fill="none"/></svg><div class="t" style="left:132px;top:569px;color:#000;z-index:1;letter-spacing:0">status (String)</div><div class="a" style="left:508px;top:567px;width:16px;height:16px;border:1px solid #1e1e1e;background:#fff"></div><svg class="a" style="left:508px;top:567px" width="16" height="16" viewBox="0 0 16 16"><path d="M3.5 8.5L6.5 11.5L13 5" stroke="#505050" stroke-width="1.2" fill="none"/></svg><div class="a" style="left:550px;top:569px;width:12px;height:12px;border:1px solid;border-color:#808080 #fff #fff #808080;background:#fff"><div class="a" style="left:0;top:0;width:10px;height:10px;border:1px solid;border-color:#404040 #d4d0c8 #d4d0c8 #404040"></div></div><svg class="a" style="left:550px;top:569px" width="12" height="12" viewBox="0 0 12 12"><path d="M3 5.5L5 7.5L9 3.5" stroke="#222" stroke-width="1.8" fill="none"/></svg><div class="a" style="left:742px;top:567px;width:16px;height:16px;border:1px solid #1e1e1e;background:#fff"></div><svg class="a" style="left:113px;top:584px" width="15" height="16" viewBox="0 0 15 16"><path d="M0.9 7L3.4 1L5.9 7M1.9 5h3" stroke="#f41818" stroke-width="1.5" fill="none"/><path d="M5.3 5.6h2.9q1.5 0 1.5 1.3q0 0.9-0.8 1.1q1 0.3 1 1.3q0 1.4-1.6 1.4h-3z" fill="#1010d8" stroke="#1010d8" stroke-width="0.8"/><path d="M6.8 6.8h0.9M6.8 8.9h0.9" stroke="#c8c8f0" stroke-width="0.9"/><path d="M14.2 10.2q-0.8-0.7-2.1-0.7q-2.6 0-2.6 2.6q0 2.6 2.6 2.6q1.3 0 2.1-0.7" stroke="#309838" stroke-width="1.3" fill="none"/></svg><div class="t" style="left:132px;top:585px;color:#000;z-index:1;letter-spacing:0">cateogory (String) <b style="color:#1818e0">?</b></div><div class="a" style="left:508px;top:583px;width:16px;height:16px;border:1px solid #1e1e1e;background:#fff"></div><svg class="a" style="left:508px;top:583px" width="16" height="16" viewBox="0 0 16 16"><path d="M3.5 8.5L6.5 11.5L13 5" stroke="#505050" stroke-width="1.2" fill="none"/></svg><div class="a" style="left:550px;top:585px;width:12px;height:12px;border:1px solid;border-color:#808080 #fff #fff #808080;background:#fff"><div class="a" style="left:0;top:0;width:10px;height:10px;border:1px solid;border-color:#404040 #d4d0c8 #d4d0c8 #404040"></div></div><svg class="a" style="left:550px;top:585px" width="12" height="12" viewBox="0 0 12 12"><path d="M3 5.5L5 7.5L9 3.5" stroke="#222" stroke-width="1.8" fill="none"/></svg><div class="a" style="left:742px;top:583px;width:16px;height:16px;border:1px solid #1e1e1e;background:#fff"></div><div class="a" style="left:16px;top:306px;width:795px;height:21px;background:#f0f0f0;border-top:1px solid #fff;border-bottom:1px solid #6e6e6e"></div><div class="a" style="left:319px;top:306px;width:1px;height:20px;background:#6e6e6e"></div><div class="a" style="left:496px;top:306px;width:1px;height:20px;background:#6e6e6e"></div><div class="a" style="left:536px;top:306px;width:1px;height:20px;background:#6e6e6e"></div><div class="a" style="left:576px;top:306px;width:1px;height:20px;background:#6e6e6e"></div><div class="a" style="left:730px;top:306px;width:1px;height:20px;background:#6e6e6e"></div><div class="a" style="left:770px;top:306px;width:1px;height:20px;background:#6e6e6e"></div><div class="a" style="left:810px;top:306px;width:1px;height:20px;background:#6e6e6e"></div><div class="a" style="left:16px;top:307px;width:1px;height:19px;background:#fff"></div><div class="a" style="left:320px;top:307px;width:1px;height:19px;background:#fff"></div><div class="a" style="left:497px;top:307px;width:1px;height:19px;background:#fff"></div><div class="a" style="left:537px;top:307px;width:1px;height:19px;background:#fff"></div><div class="a" style="left:577px;top:307px;width:1px;height:19px;background:#fff"></div><div class="a" style="left:731px;top:307px;width:1px;height:19px;background:#fff"></div><div class="a" style="left:771px;top:307px;width:1px;height:19px;background:#fff"></div><div class="t" style="left:143px;top:310px">Message</div><svg class="a" style="left:385px;top:309px" width="16" height="15" viewBox="0 0 16 15"><path d="M4.2 0.7H9.8L13.3 4.2V9.8L9.8 13.3H4.2L0.7 9.8V4.2Z" fill="#1818b0" stroke="#000" stroke-width="1.3"/><path d="M4.3 4.3L7 10L9.7 4.3" stroke="#fff" stroke-width="1.3" fill="none"/></svg><div class="t" style="left:402px;top:310px">Value</div><svg class="a" style="left:511px;top:309px" width="16" height="15" viewBox="0 0 16 15"><path d="M4.2 0.7H9.8L13.3 4.2V9.8L9.8 13.3H4.2L0.7 9.8V4.2Z" fill="#1818b0" stroke="#000" stroke-width="1.3"/><path d="M4.3 7.3L6.3 9.5L10 4.8" stroke="#fff" stroke-width="1.3" fill="none"/><path d="M0 14L14 0" stroke="#f01818" stroke-width="1.3"/></svg><svg class="a" style="left:549px;top:308px" width="16" height="16" viewBox="0 0 16 16"><path d="M1.3 6.8L3.8 9.8L10 1.5" stroke="#1a9a2a" stroke-width="1.8" fill="none"/><path d="M8.7 9.2L13.3 13.8M13.3 9.2L8.7 13.8" stroke="#e82020" stroke-width="2.2"/></svg><svg class="a" style="left:631px;top:309px" width="16" height="15" viewBox="0 0 16 15"><path d="M4.2 0.7H9.8L13.3 4.2V9.8L9.8 13.3H4.2L0.7 9.8V4.2Z" fill="#17894a" stroke="#000" stroke-width="1.3"/><path d="M4 4.3h6M7 4.3v6" stroke="#fff" stroke-width="1.8" fill="none"/></svg><div class="t" style="left:650px;top:310px">Store</div><svg class="a" style="left:744px;top:309px" width="16" height="15" viewBox="0 0 16 15"><path d="M4.2 0.7H9.8L13.3 4.2V9.8L9.8 13.3H4.2L0.7 9.8V4.2Z" fill="#17894a" stroke="#000" stroke-width="1.3"/><path d="M4 4.3h6M7 4.3v6" stroke="#fff" stroke-width="1.8" fill="none"/><path d="M0 14L14 0" stroke="#f01818" stroke-width="1.3"/></svg><svg class="a" style="left:783px;top:309px" width="16" height="15" viewBox="0 0 16 15"><path d="M4.2 0.7H9.8L13.3 4.2V9.8L9.8 13.3H4.2L0.7 9.8V4.2Z" fill="#17894a" stroke="#000" stroke-width="1.3"/><path d="M4 4.3h6M7 4.3v6" stroke="#fff" stroke-width="1.8" fill="none"/><path d="M10.3 0V15H16V0Z" fill="#f0f0f0"/><path d="M9.2 0.3l4.6 4.6M13.8 0.3l-4.6 4.6M9.2 5.2l4.6 4.6M13.8 5.2l-4.6 4.6M9.2 10l4.6 4.6M13.8 10l-4.6 4.6" stroke="#000" stroke-width="1.2"/></svg><svg class="a" style="left:25px;top:282px" width="16" height="14" viewBox="0 0 16 14"><ellipse cx="7" cy="10" rx="5.6" ry="2.7" transform="rotate(-18 7 10)" fill="#f4f4f4" stroke="#5a5a5a" stroke-width="1.4"/><ellipse cx="11.5" cy="5.8" rx="3" ry="4.6" transform="rotate(22 11.5 5.8)" fill="none" stroke="#505050" stroke-width="1.5"/><path d="M9 10.5Q11 10 12 8.5" stroke="#3a3a3a" stroke-width="1.5" fill="none"/></svg><svg class="a" style="left:46px;top:287px" width="7" height="5" viewBox="0 0 7 5"><path d="M0.5 0.5H6.5L3.5 4Z" fill="#000"/></svg><svg class="a" style="left:60px;top:283px" width="14" height="14" viewBox="0 0 14 14"><rect x="0.5" y="0.5" width="10" height="10" fill="#dff2fb" stroke="#2e3e4e"/><rect x="3.5" y="3.5" width="10" height="10" fill="#c8ecfa" stroke="#2e3e4e"/><path d="M8 6.5v6M5 9.5h6" stroke="#2a84d0" stroke-width="2.2"/></svg><svg class="a" style="left:82px;top:283px" width="14" height="14" viewBox="0 0 14 14"><rect x="0.5" y="0.5" width="10" height="10" fill="#dff2fb" stroke="#2e3e4e"/><rect x="3.5" y="3.5" width="10" height="10" fill="#c8ecfa" stroke="#2e3e4e"/><path d="M5 9.5h6" stroke="#2a84d0" stroke-width="2.2"/></svg><svg class="a" style="left:104px;top:281px" width="14" height="15" viewBox="0 0 14 15"><path d="M7 0.8L13 7.3H9.5V14H4.5V7.3H1Z" fill="#66dd44" stroke="#1ea01e" stroke-width="1"/></svg><svg class="a" style="left:126px;top:282px" width="14" height="15" viewBox="0 0 14 15"><path d="M7 14.2L13 7.7H9.5V1H4.5V7.7H1Z" fill="#66dd44" stroke="#1ea01e" stroke-width="1"/></svg><svg class="a" style="left:148px;top:282px" width="14" height="14" viewBox="0 0 14 14"><path d="M4.2 0.7H9.8L13.3 4.2V9.8L9.8 13.3H4.2L0.7 9.8V4.2Z" fill="#a8a8a8" stroke="#8a8a8a"/><circle cx="7" cy="7" r="5.2" fill="#22aa22"/><path d="M3.8 4.8h6.4M7 4.8v6" stroke="#fff" stroke-width="2.2"/></svg><svg class="a" style="left:665px;top:282px" width="16" height="16" viewBox="0 0 16 16"><rect x="1.5" y="2.5" width="12" height="9" fill="#fff" stroke="#6a6a6a" stroke-width="1.2"/><path d="M1.5 6.5h12M1.5 9h12M5.5 2.5v9M9.5 2.5v9" stroke="#6a6a6a" stroke-width="1.2"/><circle cx="5.5" cy="4.5" r="4" fill="#c4d0ec" stroke="#18285a" stroke-width="1.2" stroke-dasharray="1.2 0.6"/><path d="M8.3 7.3L13.7 13.3" stroke="#000" stroke-width="2.2"/><circle cx="13.6" cy="13.2" r="0.9" fill="#2040c0"/></svg><div class="a" style="left:685px;top:278px;width:24px;height:23px;background:#cce4f7;border:1px solid #a6cff0"></div><svg class="a" style="left:688px;top:280px" width="18" height="18" viewBox="0 0 18 18"><rect x="1.5" y="1.5" width="8" height="12" fill="#3a3a3a" stroke="#3a3a3a"/><rect x="2.5" y="2.5" width="6" height="2.5" rx="1" fill="#fff"/><rect x="2.5" y="6.5" width="6" height="2.5" rx="1" fill="#fff"/><rect x="2.5" y="10.2" width="6" height="2.3" rx="1" fill="#fff"/><path d="M6.5 7L14.8 12.6L12.2 13.2L14.2 15.8L12.9 16.8L10.9 14.3L8.8 16.2Z" fill="#f4f4f4" stroke="#2a2a2a" stroke-width="1"/></svg><div class="a" style="left:710px;top:280px;width:1px;height:19px;background:#8a8a8a"></div><svg class="a" style="left:719px;top:282px" width="15" height="15" viewBox="0 0 15 15"><rect x="0" y="0.5" width="2" height="14" fill="#fafafa" opacity="0.8"/><path d="M1.5 0.5H8.5L13.5 5.5V14.5H1.5Z" fill="url(#docg)" stroke="#55553a" stroke-width="1"/><path d="M8 0.8V6H13.2Z" fill="#a4a038"/><path d="M9 1.8V5H12.2Z" fill="#eeeed0"/><path d="M5 4.5h2.2M5 6.5h2.2M5 11.5h6" stroke="#1414a8" stroke-width="1"/><path d="M5 9.5h6" stroke="#8888c8" stroke-width="1"/></svg><svg class="a" style="left:743px;top:282px" width="10" height="13" viewBox="0 0 10 13"><rect x="0.5" y="0.5" width="9" height="12" fill="#fff" stroke="#606060"/><path d="M3.5 0v13" stroke="#606060"/><path d="M6.5 0v13" stroke="#606060"/><path d="M0 3.5h10" stroke="#606060"/><path d="M0 6.5h10" stroke="#606060"/><path d="M0 9.5h10" stroke="#606060"/></svg><svg class="a" style="left:766px;top:282px" width="10" height="13" viewBox="0 0 10 13"><rect x="0.5" y="0.5" width="9" height="12" fill="#fff" stroke="#606060"/><path d="M3.5 0v13" stroke="#606060"/><path d="M6.5 0v13" stroke="#606060"/><path d="M0 3.5h10" stroke="#606060"/><path d="M0 6.5h10" stroke="#606060"/><path d="M0 9.5h10" stroke="#606060"/></svg><div class="a" style="left:783px;top:278px;width:24px;height:23px;background:#cce4f7;border:1px solid #a6cff0"></div><svg class="a" style="left:787px;top:282px" width="13" height="13" viewBox="0 0 13 13"><rect x="0.5" y="0.5" width="12" height="12" fill="#fff" stroke="#606060"/><path d="M3.5 0v13" stroke="#606060"/><path d="M6.5 0v13" stroke="#606060"/><path d="M9.5 0v13" stroke="#606060"/><path d="M0 3.5h13" stroke="#606060"/><path d="M0 6.5h13" stroke="#606060"/><path d="M0 9.5h13" stroke="#606060"/></svg></body></html>
